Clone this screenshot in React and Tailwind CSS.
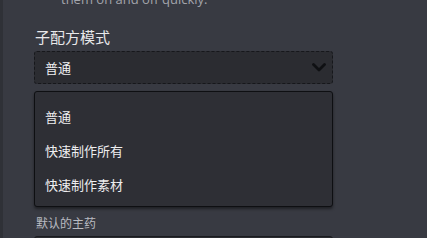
import React from 'react';

const cjk = { fontFamily: '"Noto Sans CJK SC", "Noto Sans", sans-serif' };

const options = ['普通', '快速制作所有', '快速制作素材'];

const App = () => {
  return (
    <div className="w-[427px] h-[238px] overflow-hidden flex bg-[#383a42]" style={cjk}>
      <div className="w-[3px] h-full shrink-0 bg-[#2f3137]" />
      <div className="flex flex-col pl-[31px] w-[330px] shrink-0">
        <p className="shrink-0 -mt-[9px] pl-[27px] text-[13px] leading-[16px] text-[#a2a4ab] whitespace-nowrap" style={{ fontFamily: '"Open Sans", sans-serif' }}>
          them on and off quickly.
        </p>
        <label className="shrink-0 mt-[21px] pl-[1px] text-[15px] leading-[18px] text-[#e8e8ea]">子配方模式</label>
        <div className="shrink-0 mt-[5px] h-[33px] flex items-center justify-between px-[10px] rounded-[3px] bg-[#2b2c31] border border-dashed border-[#16171b]">
          <span className="text-[13px] leading-[16px] text-[#f0f0f2]">普通</span>
          <svg width="14" height="9" viewBox="0 0 14 9" className="mr-[-4px]">
            <polyline points="1.5,1.5 7,7 12.5,1.5" fill="none" stroke="#0f1013" strokeWidth="2.8" strokeLinecap="round" strokeLinejoin="round" />
          </svg>
        </div>
        <ul className="shrink-0 mt-[7px] h-[116px] pt-[8px] rounded-[3px] bg-[#2e2f35] border border-[#0e0f12] shadow-[0_2px_3px_rgba(0,0,0,0.45)]">
          {options.map(item => (
            <li key={item} className="h-[34px] flex items-center px-[10px] text-[13px] text-[#eeeef0]">
              {item}
            </li>
          ))}
        </ul>
        <label className="shrink-0 mt-[8px] pl-[2px] text-[12px] leading-[16px] text-[#b9bbc1]">默认的主药</label>
        <div className="shrink-0 mt-[5px] h-[33px] rounded-[3px] bg-[#2b2c31] border border-[#1a1b1f]" />
      </div>
    </div>
  );
};

export default App;
